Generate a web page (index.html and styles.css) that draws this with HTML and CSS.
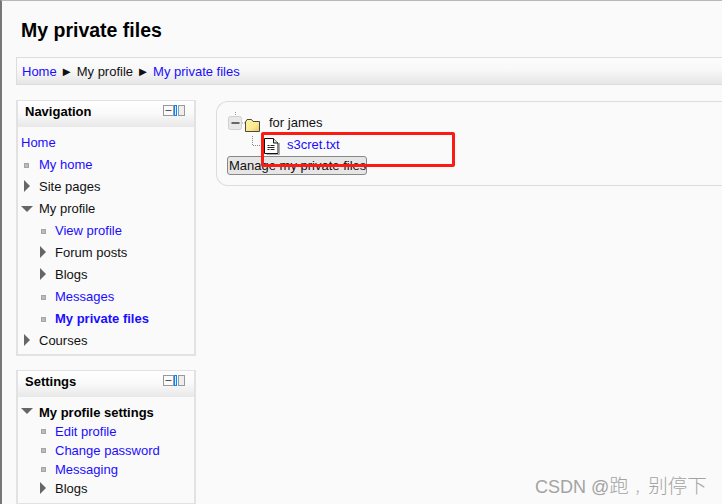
FILE: index.html
```html
<!DOCTYPE html>
<html lang="en">
<head>
<meta charset="utf-8">
<title>My private files</title>
<link rel="stylesheet" href="styles.css">
</head>
<body>
<div class="page">
  <h1 class="title">My private files</h1>
  <nav class="crumbs">
    <a href="#">Home</a><span class="sep">►</span><span>My profile</span><span class="sep">►</span><a href="#">My private files</a>
  </nav>
  <div class="columns">
    <aside class="side">
      <section class="block">
        <header class="block-head">
          <h2>Navigation</h2>
          <span class="controls">
            <svg width="22" height="11" viewBox="0 0 22 11"><rect x=".5" y=".5" width="10" height="10" fill="#fafafa" stroke="#999"/><path d="M2.500 5.500h6" stroke="#555"/><rect x="11.500" y=".5" width="2" height="10" fill="#dcecff" stroke="#0a84ff"/><rect x="15.500" y=".5" width="6" height="10" fill="#eee" stroke="#999"/></svg>
          </span>
        </header>
        <ul class="tree nav-tree">
          <li class="plain"><a href="#">Home</a></li>
          <li class="dot"><a href="#">My home</a></li>
          <li class="closed">Site pages</li>
          <li class="open">My profile</li>
          <li class="sub dot"><a href="#">View profile</a></li>
          <li class="sub closed">Forum posts</li>
          <li class="sub closed">Blogs</li>
          <li class="sub dot"><a href="#">Messages</a></li>
          <li class="sub dot"><a href="#" class="strong">My private files</a></li>
          <li class="closed">Courses</li>
        </ul>
      </section>
      <section class="block">
        <header class="block-head">
          <h2>Settings</h2>
          <span class="controls">
            <svg width="22" height="11" viewBox="0 0 22 11"><rect x=".5" y=".5" width="10" height="10" fill="#fafafa" stroke="#999"/><path d="M2.500 5.500h6" stroke="#555"/><rect x="11.500" y=".5" width="2" height="10" fill="#dcecff" stroke="#0a84ff"/><rect x="15.500" y=".5" width="6" height="10" fill="#eee" stroke="#999"/></svg>
          </span>
        </header>
        <ul class="tree set-tree">
          <li class="open strong-row">My profile settings</li>
          <li class="sub dot"><a href="#">Edit profile</a></li>
          <li class="sub dot"><a href="#">Change password</a></li>
          <li class="sub dot"><a href="#">Messaging</a></li>
          <li class="sub closed">Blogs</li>
        </ul>
      </section>
    </aside>
    <main class="files">
      <div class="folder-row">
        <svg class="folder-icon" width="34" height="24" viewBox="0 0 34 24">
          <defs><linearGradient id="fold" x1="0" y1="0" x2="1" y2="1"><stop offset="0" stop-color="#fdf4a8"/><stop offset=".6" stop-color="#fbe98c"/><stop offset="1" stop-color="#e0c47e"/></linearGradient></defs>
          <path d="M8.500 0v4" stroke="#999" stroke-dasharray="1 1"/>
          <rect x="1.500" y="4.500" width="13" height="13" rx="2" fill="#e8e8e8" stroke="#d0d0d0"/>
          <rect x="4.500" y="10" width="8" height="2" fill="#666"/>
          <path d="M15 11h3" stroke="#999" stroke-dasharray="1 1"/>
          <path d="M18.500 10l1.500-2.500h4.500l1.500 2h6.500v10h-14z" fill="url(#fold)" stroke="#4a4a3a" stroke-linejoin="round"/>
        </svg>
        <span class="folder-name">for james</span>
      </div>
      <div class="file-row">
        <svg class="file-icon" width="36" height="22" viewBox="0 0 36 22">
          <path d="M.5 1v9.500H10" fill="none" stroke="#888" stroke-dasharray="1 1"/>
          <path d="M27.500 8v11.500H14.500" fill="none" stroke="#aaa"/>
          <path d="M12.500 3.500h9l4.500 4.500v10.500H12.500z" fill="#fff" stroke="#111"/>
          <path d="M21.500 3.500V8H26" fill="#e4e4e4" stroke="#111"/>
          <path d="M15.500 10.500h2m1 0h4M15.500 12.500h7M15.500 14.500h2m1 0h4" stroke="#222"/>
        </svg>
        <a href="#">s3cret.txt</a>
      </div>
      <button class="manage" type="button">Manage my private files</button>
    </main>
  </div>
</div>
<div class="highlight"></div>
<div class="watermark">CSDN @<span class="cjk">跑<span class="comma">，</span>别停下</span></div>
</body>
</html>
```
FILE: styles.css
```css
html, body { margin: 0; padding: 0; }
body {
  width: 722px;
  height: 504px;
  overflow: hidden;
  position: relative;
  background: #fafafa;
  font-family: "Liberation Sans", Arial, sans-serif;
  font-size: 13px;
  color: #111;
}
a { color: #1a0dff; text-decoration: none; }
.page {
  box-sizing: border-box;
  height: 504px;
  border-top: 1px solid #b8b8b8;
  border-left: 2px solid #777;
  padding: 0 0 0 14px;
}
.title {
  margin: 0;
  padding: 17px 0 0 5px;
  height: 39px;
  font-size: 19.500px;
  line-height: 24px;
  font-weight: bold;
  color: #000;
}
.crumbs {
  box-sizing: border-box;
  height: 28px;
  border: 1px solid #ddd;
  border-right: 0;
  padding: 0 0 0 5px;
  line-height: 27px;
  background: linear-gradient(#fcfcfc 0%, #f8f8f8 45%, #e6e6e6 100%);
}
.sep { display: inline-block; width: 20px; text-align: center; font-size: 13px; }
.columns {
  display: flex;
  gap: 20px;
  margin-top: 15px;
  align-items: flex-start;
}
.side { width: 180px; flex: none; display: flex; flex-direction: column; gap: 14px; }
.block {
  box-sizing: border-box;
  border: 2px solid #e2e2e2;
  border-top-width: 1px;
  background: #fafafa;
}
.block-head {
  height: 26px;
  display: flex;
  justify-content: space-between;
  padding: 2px 9px 0 7px;
  box-sizing: border-box;
  background: linear-gradient(#fff 0%, #fafafa 45%, #e8e8e8 100%);
}
.block-head h2 {
  margin: 0;
  font-size: 13px;
  line-height: 18px;
  color: #000;
}
.controls { line-height: 0; padding-top: 2px; }
.tree { list-style: none; margin: 0; padding: 0; }
.nav-tree { padding: 5px 0 2px; }
.nav-tree li { height: 22px; line-height: 22px; }
.set-tree { padding: 6px 0 5px; }
.set-tree li { height: 19px; line-height: 19px; }
.set-tree .strong-row { font-weight: bold; color: #000; }
.tree li { position: relative; padding-left: 21px; white-space: nowrap; }
.tree li.plain { padding-left: 3px; }
.tree li.sub { padding-left: 37px; }
.strong { font-weight: bold; }
.dot::before {
  content: "";
  position: absolute;
  left: 6px;
  top: 9px;
  width: 3px;
  height: 3px;
  background: #bbb;
  border: 1px solid #a5a5a5;
}
.sub.dot::before { left: 23px; }
.set-tree .dot::before { top: 7px; }
.closed::before {
  content: "";
  position: absolute;
  left: 6px;
  top: 4px;
  border-left: 6px solid #666;
  border-top: 6px solid transparent;
  border-bottom: 6px solid transparent;
}
.sub.closed::before { left: 22px; }
.set-tree .closed::before { top: 3px; }
.open::before {
  content: "";
  position: absolute;
  left: 3px;
  top: 8px;
  border-top: 6px solid #666;
  border-left: 6px solid transparent;
  border-right: 6px solid transparent;
}
.set-tree .open::before { top: 5px; }
.files {
  flex: 1;
  box-sizing: border-box;
  height: 85px;
  margin-top: 1px;
  border: 1px solid #ddd;
  border-right: 0;
  border-radius: 12px 0 0 12px;
  padding: 10px 0 0 10px;
  background: #fafafa;
}
.folder-row { display: flex; height: 24px; align-items: flex-start; }
.folder-icon { flex: none; }
.folder-name { margin-left: 8px; line-height: 22px; }
.file-row { display: flex; height: 21px; margin-left: 25px; margin-top: -1px; align-items: flex-start; }
.file-icon { flex: none; margin-right: -1px; }
.file-row a { line-height: 20px; }
.manage {
  display: block;
  box-sizing: border-box;
  width: 140px;
  height: 19px;
  margin: 0;
  padding: 0 0 0 1px;
  border: 1px solid #888;
  border-radius: 3px;
  background: #e6e6e6;
  color: #111;
  font: 13px "Liberation Sans", Arial, sans-serif;
  line-height: 16px;
  text-align: left;
  white-space: nowrap;
}
.highlight {
  position: absolute;
  left: 261px;
  top: 132px;
  width: 188px;
  height: 29px;
  border: 3px solid #fb1b12;
  border-radius: 2px;
}
.watermark {
  position: absolute;
  left: 535px;
  top: 474px;
  font-size: 18px;
  line-height: 22px;
  white-space: nowrap;
  color: #a3a3a3;
  font-family: "Liberation Sans", "Noto Sans CJK SC", sans-serif;
}
.cjk { font-size: 19.500px; font-family: "Noto Sans CJK SC", sans-serif; font-weight: 300; }
.comma { font-size: 13px; padding-left: 6px; padding-right: 0.500px; }
```
